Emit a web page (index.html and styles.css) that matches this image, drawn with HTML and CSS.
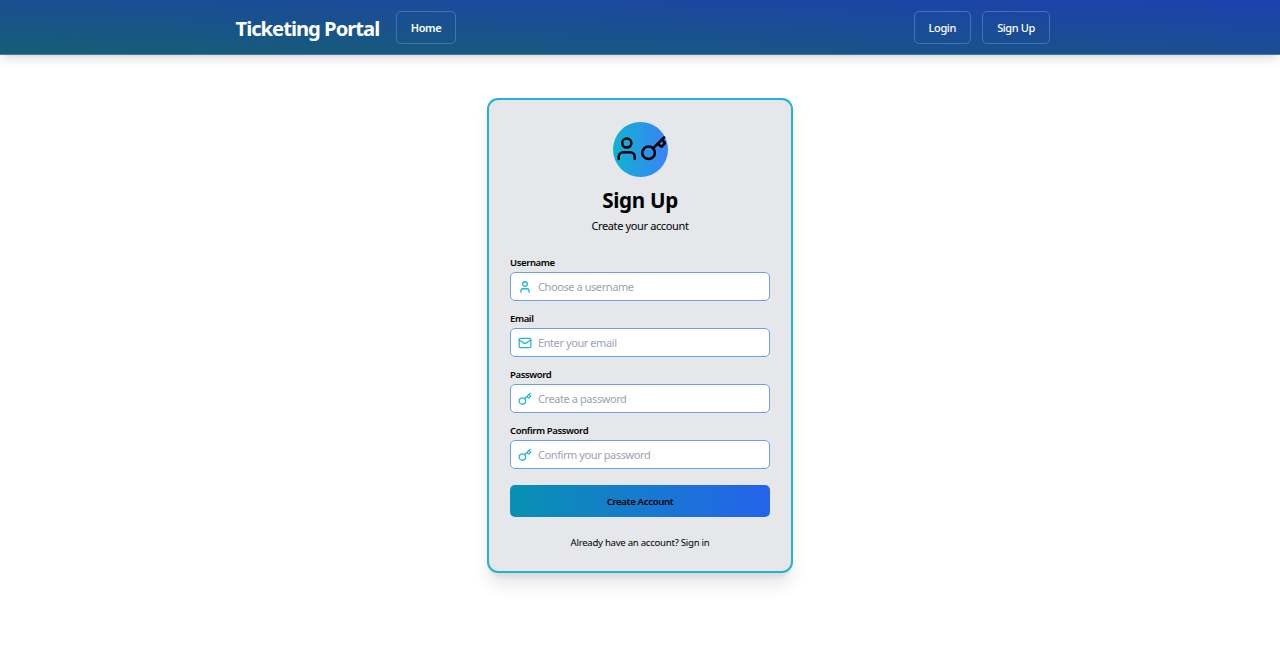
FILE: index.html
```html
<!DOCTYPE html>
<html lang="en">
<head>
<meta charset="utf-8">
<title>Ticketing Portal</title>
<link rel="stylesheet" href="styles.css">
</head>
<body>
<svg class="defs" aria-hidden="true">
  <symbol id="user" viewBox="0 0 24 24"><path d="M19 21v-2a4 4 0 0 0-4-4H9a4 4 0 0 0-4 4v2"/><circle cx="12" cy="7" r="4"/></symbol>
  <symbol id="key" viewBox="0 0 24 24"><path d="m15.5 7.5 2.3 2.3a1 1 0 0 0 1.4 0l2.1-2.1a1 1 0 0 0 0-1.4L19 4"/><path d="m21 2-9.6 9.6"/><circle cx="7.5" cy="15.5" r="5.5"/></symbol>
  <symbol id="mail" viewBox="0 0 24 24"><rect x="2" y="4" width="20" height="16" rx="2"/><path d="m22 7-8.97 5.7a1.94 1.94 0 0 1-2.06 0L2 7"/></symbol>
</svg>
<header class="navbar">
  <div class="nav-inner">
    <span class="brand">Ticketing Portal</span>
    <a class="nav-btn home">Home</a>
    <nav class="nav-end">
      <a class="nav-btn login">Login</a>
      <a class="nav-btn signup">Sign Up</a>
    </nav>
  </div>
</header>
<main>
  <form class="card">
    <div class="avatar"><svg><use href="#user"/></svg><svg><use href="#key"/></svg></div>
    <h1>Sign Up</h1>
    <p class="subtitle">Create your account</p>
    <div class="field">
      <label>Username</label>
      <div class="input"><svg><use href="#user"/></svg><span>Choose a username</span></div>
    </div>
    <div class="field">
      <label>Email</label>
      <div class="input"><svg><use href="#mail"/></svg><span>Enter your email</span></div>
    </div>
    <div class="field">
      <label>Password</label>
      <div class="input"><svg><use href="#key"/></svg><span>Create a password</span></div>
    </div>
    <div class="field">
      <label>Confirm Password</label>
      <div class="input"><svg><use href="#key"/></svg><span>Confirm your password</span></div>
    </div>
    <button type="button" class="submit">Create Account</button>
    <p class="signin">Already have an account? Sign in</p>
  </form>
</main>
</body>
</html>
```
FILE: styles.css
```css
* { box-sizing: border-box; }
body { margin: 0; background: #fff; color: #000; font-family: "Segoe UI", "Noto Sans", sans-serif; height: 651px; overflow: hidden; }
h1, p { margin: 0; }
.defs { position: absolute; width: 0; height: 0; }
svg { fill: none; stroke: currentColor; stroke-width: 2.2; stroke-linecap: round; stroke-linejoin: round; flex: none; }
.navbar { height: 55px; background: linear-gradient(to top right, #155e75, #1e40af); border-bottom: 1px solid #4b7898; box-shadow: 0 7px 10px -2px rgba(0,0,0,.1), 0 3px 4px -3px rgba(0,0,0,.1); }
.nav-inner { width: 814.5px; margin-left: 235.5px; height: 55px; display: flex; align-items: center; color: #fff; }
.brand { font-size: 20.2px; font-weight: 700; letter-spacing: -1px; width: 160.5px; white-space: nowrap; line-height: 28px; }
.nav-btn { height: 33px; border: 1px solid rgba(147,180,253,.35); border-radius: 5px; display: flex; align-items: center; justify-content: center; font-size: 11px; white-space: nowrap; }
.home { width: 60px; font-weight: 600; letter-spacing: -.4px; }
.nav-end { margin-left: auto; display: flex; gap: 11.5px; }
.login { width: 56.5px; font-weight: 500; letter-spacing: -.4px; }
.signup { width: 68px; font-weight: 500; letter-spacing: -.4px; }
main { display: flex; justify-content: center; padding-top: 43px; }
.card { width: 306px; height: 475px; background: #e5e7eb; border: 2px solid #22b5ce; border-radius: 11px; padding: 22px 21px; box-shadow: 0 14px 17px -3px rgba(0,0,0,.1), 0 6px 7px -4px rgba(0,0,0,.1); display: flex; flex-direction: column; }
.avatar { width: 55px; height: 55px; flex: none; border-radius: 50%; background: linear-gradient(to right, #10b3d2, #3b82f6); display: flex; align-items: center; align-self: center; padding-bottom: 1px; }
.avatar svg { width: 27.5px; height: 27.5px; }
h1 { font-size: 20.6px; line-height: 28px; font-weight: 700; text-align: center; margin-top: 9px; letter-spacing: -.3px; }
.subtitle { font-size: 11px; line-height: 16px; text-align: center; margin: 4px 0 22px; letter-spacing: -.37px; }
.field { height: 56px; flex: none; display: flex; flex-direction: column; }
label { font-size: 9.5px; line-height: 14px; font-weight: 600; margin-bottom: 2px; letter-spacing: -.38px; }
.input { height: 29px; background: #fff; border: 1px solid #6f9fdf; border-radius: 5px; display: flex; align-items: center; padding-left: 7px; gap: 6px; font-size: 11px; color: #9ca3af; white-space: nowrap; letter-spacing: -.42px; }
.input svg { width: 14px; height: 14px; color: #22b8cf; }
.submit { height: 32px; flex: none; margin-top: 5px; padding: 0; border: 0; border-radius: 5px; background: linear-gradient(to right, #0891b2, #2563eb); font: 600 9.6px "Segoe UI", "Noto Sans", sans-serif; color: #000; letter-spacing: -.34px; }
.signin { font-size: 9.6px; line-height: 14px; text-align: center; margin-top: 19px; letter-spacing: -.26px; }
```
